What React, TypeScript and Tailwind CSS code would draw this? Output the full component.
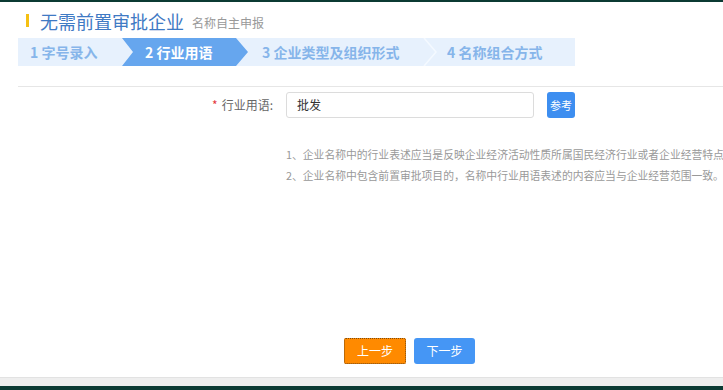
import React from "react";

const font = { fontFamily: '"Microsoft YaHei", "Noto Sans CJK SC", "Liberation Sans", sans-serif' };

const notes = [
  "1、企业名称中的行业表述应当是反映企业经济活动性质所属国民经济行业或者企业经营特点的用语。",
  "2、企业名称中包含前置审批项目的，名称中行业用语表述的内容应当与企业经营范围一致。",
];

export default function App() {
  return (
    <div className="w-[723px] h-[390px] overflow-hidden bg-white flex flex-col" style={font}>
      <div className="h-[2px] bg-[#0b3a33] shrink-0" />

      <div className="flex-1 flex flex-col">
        {/* 标题 */}
        <div className="flex items-end h-[31px] pl-[26px] pt-[6px]">
          <span className="w-[3px] h-[13px] bg-[#f5c012] mb-[6px] mr-[11px]" />
          <span className="text-[18px] leading-[24px] text-[#3f7ac4]">无需前置审批企业</span>
          <span className="text-[12px] leading-[20px] text-[#999] ml-[8px]">名称自主申报</span>
        </div>

        {/* 步骤 */}
        <div className="ml-[18px] mt-[5px] w-[557px] h-[28px] bg-[#e7f1fd] flex items-center text-[14px] font-bold text-[#86b5ea] whitespace-nowrap">
          <div className="w-[104px] pl-[12px]">1 字号录入</div>
          <div className="w-[126px] h-full bg-[#66a6ee] text-white flex items-center pl-[23px] [clip-path:polygon(0_0,114px_0,126px_50%,114px_100%,0_100%,11px_50%)]">
            2 行业用语
          </div>
          <div className="w-[177px] pl-[14px]">3 企业类型及组织形式</div>
          <svg width="14" height="28" viewBox="0 0 14 28" className="shrink-0 -ml-[2px]">
            <polyline points="1,0 13,14 1,28" fill="none" stroke="#f4f9ff" strokeWidth="1.5" />
          </svg>
          <div className="pl-[10px]">4 名称组合方式</div>
        </div>

        <div className="ml-[18px] mt-[20px] h-px bg-[#e6e6e6]" />

        {/* 表单 */}
        <div className="flex items-center mt-[5px] h-[26px]">
          <div className="w-[273px] text-right text-[12px] text-[#666]">
            <span className="text-[#e4393c] mr-[4px]">*</span>行业用语:
          </div>
          <div className="ml-[13px] w-[248px] h-[26px] border border-[#dcdcdc] rounded-[3px] flex items-center pl-[10px] text-[12px] text-[#333]">
            批发
          </div>
          <button className="ml-[13px] w-[28px] h-[26px] rounded-[3px] bg-[#3d8ef0] text-white text-[11px]">参考</button>
        </div>

        <div className="ml-[286px] mt-[29px] flex flex-col gap-[7px] text-[10.8px] leading-[14px] text-[#999] whitespace-nowrap">
          {notes.map((n) => (
            <div key={n}>{n}</div>
          ))}
        </div>

        <div className="flex-1" />

        <div className="flex gap-[8px] ml-[344px] mb-[13px]">
          <button className="w-[62px] h-[26px] rounded-[2px] bg-[#ff8a00] text-white text-[12px] outline outline-1 outline-dotted outline-[#7a4a10] -outline-offset-1">
            上一步
          </button>
          <button className="w-[61px] h-[26px] rounded-[3px] bg-[#4596f5] text-white text-[12px]">下一步</button>
        </div>
      </div>

      <div className="h-[9px] bg-[#eeeeee] border-t border-[#e2e2e2] shrink-0" />
      <div className="h-[4px] bg-[#0b3a33] shrink-0" />
    </div>
  );
}
